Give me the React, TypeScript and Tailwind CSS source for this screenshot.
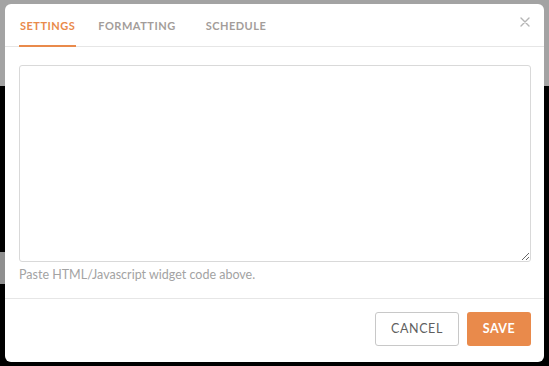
import React, { useState } from 'react';

export default function App() {
  const [tab, setTab] = useState('settings');

  const tabs = [
    { id: 'settings', label: 'SETTINGS', cls: 'ml-0' },
    { id: 'formatting', label: 'FORMATTING', cls: 'ml-[21px]' },
    { id: 'schedule', label: 'SCHEDULE', cls: 'ml-[28px]' },
  ];

  return (
    <div className="relative w-[549px] h-[366px] overflow-hidden bg-black" style={{ fontFamily: 'Lato, "Open Sans", sans-serif' }}>
      {/* backdrop - page behind the modal */}
      <div className="h-[86px] bg-[#a3a3a3]" />
      <div className="mt-[166px] h-[32px] w-[8px] bg-[#8f8f8f]" />

      {/* Modal */}
      <div className="absolute left-[5px] top-[4px] w-[539px] h-[358px] bg-white rounded-[6px] flex flex-col">
        {/* Header / tabs */}
        <div className="relative h-[43px] border-b border-[#e6e6e6] flex items-end px-[14px]">
          {tabs.map((t) => (
            <button
              key={t.id}
              onClick={() => setTab(t.id)}
              className={`${t.cls} h-[43px] px-[1px] pt-[3px] text-[11px] font-bold tracking-[0.5px] border-b-2 -mb-px ${
                tab === t.id ? 'text-[#e98a4b] border-[#e98a4b]' : 'text-[#a39d9a] border-transparent'
              }`}
            >
              {t.label}
            </button>
          ))}
          <button className="absolute right-[14px] top-[13px] text-[#b5b5b5] hover:text-gray-600">
            <svg width="10" height="10" viewBox="0 0 10 10" fill="none">
              <path d="M1 1 L9 9 M9 1 L1 9" stroke="currentColor" strokeWidth="1.4" strokeLinecap="round" />
            </svg>
          </button>
        </div>

        {/* Body */}
        <div className="px-[14px] pt-[18px] h-[252px] border-b border-[#e6e6e6]">
          <textarea className="block w-[512px] h-[197px] border border-[#d9d9d9] rounded-[3px] outline-none p-2 text-sm resize-y" />
          <p className="mt-[4px] text-[12.5px] text-[#a3a3a3]">Paste HTML/Javascript widget code above.</p>
        </div>

        {/* Footer */}
        <div className="flex justify-end gap-[8px] px-[13px] pt-[13px]">
          <button className="w-[84px] h-[34px] border border-[#c8c8c8] rounded-[3px] text-[12.5px] tracking-[0.6px] text-[#5f5f5f] bg-white">
            CANCEL
          </button>
          <button className="w-[64px] h-[34px] rounded-[3px] text-[12.5px] font-bold tracking-[0.5px] text-white bg-[#e98a4b]">
            SAVE
          </button>
        </div>
      </div>
    </div>
  );
}
